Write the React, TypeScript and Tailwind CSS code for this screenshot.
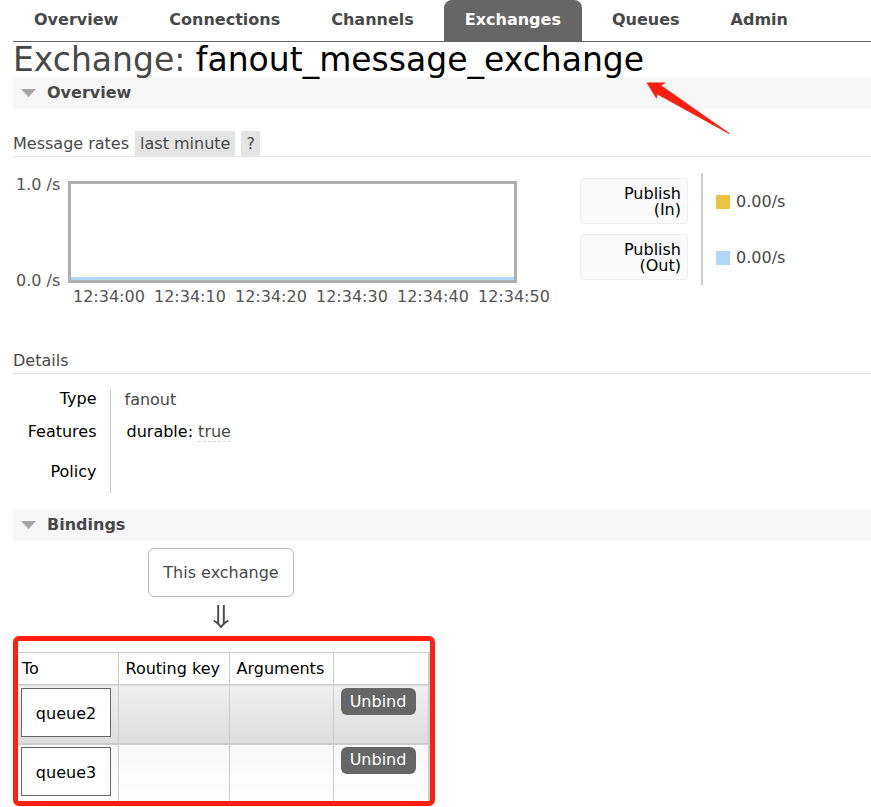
import type { ReactNode } from 'react';

const tabs = ['Overview', 'Connections', 'Channels', 'Exchanges', 'Queues', 'Admin'];
const times = ['12:34:00', '12:34:10', '12:34:20', '12:34:30', '12:34:40', '12:34:50'];
const queues = ['queue2', 'queue3'];

function SectionHeader({ children }: { children: ReactNode }) {
  return (
    <h2 className="bg-[#f7f7f7] font-bold leading-8">
      <button type="button" className="flex w-full items-center gap-[11px] pl-2">
        <svg width="15" height="8" viewBox="0 0 15 8" aria-hidden="true">
          <path d="M0 0H15L7.5 8Z" fill="#a5a5a5" />
        </svg>
        {children}
      </button>
    </h2>
  );
}

function Chart() {
  return (
    <div className="grid w-[540px] shrink-0 grid-cols-[55px_449px] text-[#545454]">
      <div className="flex h-[112px] flex-col justify-between pl-[3px] leading-4">
        <span>1.0 /s</span>
        <span>0.0 /s</span>
      </div>
      <div className="mt-1 flex h-[102px] flex-col justify-end border-[3px] border-[#afafaf]">
        <div className="h-[3px] bg-[#afd8f8]" />
      </div>
      <div className="col-start-2 flex gap-[5px] pl-[5px] leading-4">
        {times.map((t) => (
          <span key={t} className="w-[76px] shrink-0 whitespace-nowrap">{t}</span>
        ))}
      </div>
    </div>
  );
}

function Rate({ label, color }: { label: string; color: string }) {
  return (
    <tr>
      <th className="border-r-2 border-[#cccccc] p-0 pr-[13px] font-normal">
        <button
          type="button"
          className="my-[5px] block h-[46px] w-[108px] rounded border border-[#f0f0f0] bg-[#fafafa] pt-0.5 pr-1.5 text-right leading-4 text-black"
        >
          Publish
          <br />({label})
        </button>
      </th>
      <td className="pt-0.5 pl-[13px]">
        <span className="flex items-center gap-1.5">
          <span className={`size-3.5 ${color}`} />
          0.00/s
        </span>
      </td>
    </tr>
  );
}

export default function App() {
  return (
    <div className="relative overflow-hidden bg-white pl-[13px] font-['Verdana','DejaVu_Sans',sans-serif] text-[16px] leading-5 text-[#484848]">
      <nav className="flex h-[42px] gap-[9px] border-b border-[#666666]">
        {tabs.map((t) => (
          <a
            key={t}
            href="#"
            className={
              t === 'Exchanges'
                ? 'rounded-t-lg bg-[#666666] px-[21px] leading-10 font-bold text-white'
                : 'px-[21px] leading-10 font-bold'
            }
          >
            {t}
          </a>
        ))}
      </nav>

      <h1 className="text-[33px] leading-[35px] whitespace-nowrap">
        Exchange: <span className="text-black">fanout_message_exchange</span>
      </h1>

      <SectionHeader>Overview</SectionHeader>

      <h3 className="mt-[22px] flex items-end gap-1.5 border-b border-[#e4e4e4] leading-6">
        Message rates
        <button type="button" className="bg-[#e4e4e4] px-[5px] pt-px">last minute</button>
        <button type="button" className="bg-[#e4e4e4] px-[5px] pt-px">?</button>
      </h3>

      <div className="mt-4 flex items-start gap-[27px]">
        <div className="pt-1">
          <Chart />
        </div>
        <table className="border-collapse">
          <tbody>
            <Rate label="In" color="bg-[#edc240]" />
            <Rate label="Out" color="bg-[#afd8f8]" />
          </tbody>
        </table>
      </div>

      <h3 className="mt-[44px] border-b border-[#e4e4e4] leading-6">Details</h3>

      <table className="mt-4 border-collapse">
        <tbody>
          <tr className="h-[33px] align-top leading-[18px]">
            <th className="w-[97px] border-r border-[#cccccc] pr-[13px] text-right font-normal text-black">Type</th>
            <td className="pl-[14px] leading-5">fanout</td>
          </tr>
          <tr className="h-10 align-top leading-[18px]">
            <th className="border-r border-[#cccccc] pr-[13px] text-right font-normal text-black">Features</th>
            <td className="pl-4">
              <span className="text-black">durable:</span>{' '}
              <abbr title="true" className="border-b border-dashed border-[#dddddd] no-underline">true</abbr>
            </td>
          </tr>
          <tr className="h-[30px] align-top leading-[18px]">
            <th className="border-r border-[#cccccc] pr-[13px] text-right font-normal text-black">Policy</th>
            <td />
          </tr>
        </tbody>
      </table>

      <div className="mt-4">
        <SectionHeader>Bindings</SectionHeader>
      </div>

      <div className="mt-[7px] flex w-[416px] flex-col items-center">
        <span className="rounded-md border border-[#bbbbbb] px-[14px] py-[14px] leading-[19px]">This exchange</span>
        <svg className="mt-2 mb-2" width="16" height="23" viewBox="0 0 16 23" fill="none" stroke="#484848" aria-hidden="true">
          <path d="M5.2 0V19M10.8 0V19" strokeWidth="1.9" />
          <path d="M.8 15.5Q5 18 8 22Q11 18 15.2 15.5" strokeWidth="2" />
        </svg>
      </div>

      <div className="w-fit rounded-md border-[5px] border-[#ff1f11] pt-[11px] text-black">
        <table className="border-collapse">
          <thead>
            <tr className="h-8 border-t border-[#cccccc] text-left">
              <th className="w-[100px] border-r border-[#cccccc] pl-1 font-normal">To</th>
              <th className="w-[111px] border-r border-[#cccccc] pl-[7px] font-normal whitespace-nowrap">Routing key</th>
              <th className="w-[104px] border-r border-[#cccccc] pl-[7px] font-normal">Arguments</th>
              <th className="w-[96px] border-r-2 border-[#cccccc]" />
            </tr>
          </thead>
          <tbody>
            {queues.map((q, i) => (
              <tr
                key={q}
                className={
                  i === 0
                    ? 'h-[59px] border-t border-[#cccccc] bg-linear-to-b from-[#f0f0f0] to-[#dddddd] align-top'
                    : 'h-[57px] border-t-2 border-[#cccccc] bg-linear-to-b from-[#f8f8f8] to-white align-top'
                }
              >
                <td className={i === 0 ? 'border-r border-[#cccccc] pt-[3px] pl-[3px]' : 'border-r border-[#cccccc] pt-0.5 pl-[3px]'}>
                  <a href="#" className="block h-[49px] w-[90px] border border-[#666666] bg-white text-center leading-[49px]">
                    {q}
                  </a>
                </td>
                <td className="border-r border-[#cccccc]" />
                <td className="border-r border-[#cccccc]" />
                <td className={i === 0 ? 'border-r-2 border-[#cccccc] pt-[3px] pl-[7px]' : 'border-r-2 border-[#cccccc] pt-0.5 pl-[7px]'}>
                  <button type="button" className="block h-[27px] w-[75px] rounded-md bg-[#666666] text-white">
                    Unbind
                  </button>
                </td>
              </tr>
            ))}
          </tbody>
        </table>
      </div>

      <svg className="absolute top-[82px] left-[646px]" width="85" height="53" viewBox="0 0 85 53" aria-hidden="true">
        <path d="M0.5 0.5L20 .5L15.5 3.5L84 51.5L83 52L11.5 12.5L10.5 17Z" fill="#ff1f11" />
      </svg>
    </div>
  );
}
